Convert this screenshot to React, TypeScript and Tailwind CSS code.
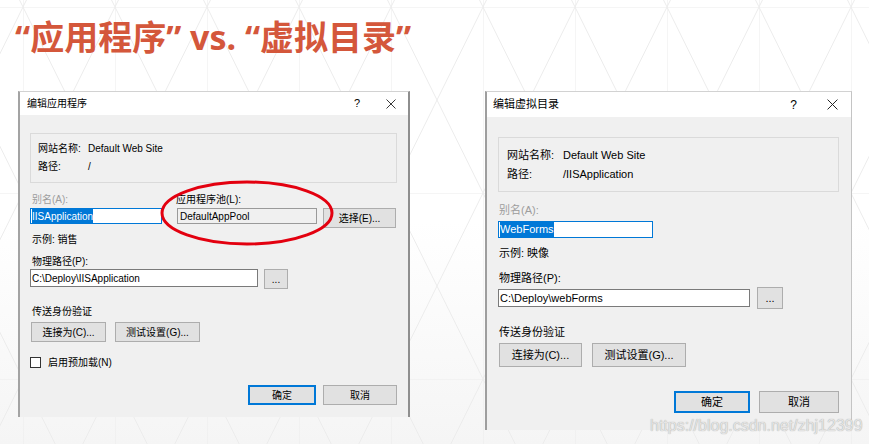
const font = { fontFamily: '"Liberation Sans", "Noto Sans CJK SC", sans-serif' }

function CloseIcon({ size }: { size: number }) {
  return (
    <svg width={size} height={size} viewBox="0 0 10 10" className="block">
      <path d="M0.5 0.5 L9.5 9.5 M9.5 0.5 L0.5 9.5" stroke="#222" strokeWidth="0.9" fill="none" />
    </svg>
  )
}

function Background() {
  return (
    <svg className="absolute inset-0" width="869" height="444">
      <defs>
        <pattern id="lattice" x="23" y="7" width="92" height="186" patternUnits="userSpaceOnUse">
          <path d="M0 0 V186 M0 0 H92 M0 0 L92 186 M92 0 L0 186" stroke="#ececec" strokeWidth="1" fill="none" />
        </pattern>
      </defs>
      <rect width="869" height="444" fill="url(#lattice)" />
    </svg>
  )
}

function LeftDialog() {
  return (
    <div className="flex h-[326px] w-[392px] shrink-0 flex-col border-t border-r-2 border-l-2 border-t-[#d2d2d2] border-r-[#8e8e8e] border-l-[#a3a3a3] bg-[#f0f0f0] text-[10px] text-black">
      <div className="flex h-[23px] items-center bg-white pl-[7px]">
        <span>编辑应用程序</span>
        <span className="ml-auto text-[11px]">?</span>
        <span className="mr-[12px] ml-[26px]"><CloseIcon size={10} /></span>
      </div>
      <div className="flex flex-col pr-[11px] pl-[10px]">
        <div className="mt-[18px] flex h-[50px] flex-col gap-[4px] border border-[#dadada] pt-[7px] pl-[7px]">
          <div className="flex h-[14px] items-center">
            <span className="w-[50px]">网站名称:</span>
            <span>Default Web Site</span>
          </div>
          <div className="flex h-[14px] items-center">
            <span className="w-[50px]">路径:</span>
            <span>/</span>
          </div>
        </div>

        <div className="mt-[9px] flex h-[14px] items-center">
          <span className="w-[146px] pl-[2px] text-[#9d9d9d]">别名(A):</span>
          <span>应用程序池(L):</span>
        </div>
        <div className="mt-[2px] flex items-start">
          <div className="flex h-[16px] w-[132px] items-center border border-[#0078d7] bg-white pl-px">
            <span className="bg-[#0078d7] text-white">IISApplication</span>
          </div>
          <div className="ml-[15px] flex h-[16px] w-[140px] items-center border border-[#9a9a9a] bg-[#f0f0f0] pl-[2px]">
            DefaultAppPool
          </div>
          <div className="ml-[6px] flex h-[20px] w-[73px] items-center justify-center border border-[#adadad] bg-[#e1e1e1]">
            选择(E)...
          </div>
        </div>

        <div className="mt-[4px] flex h-[14px] items-center pl-[2px]">示例: 销售</div>
        <div className="mt-[8px] flex h-[14px] items-center pl-[2px]">物理路径(P):</div>
        <div className="mt-[1px] flex items-start">
          <div className="flex h-[18px] w-[228px] items-center border border-[#7a7a7a] bg-white pl-px">
            C:\Deploy\IISApplication
          </div>
          <div className="ml-[6px] flex h-[20px] w-[24px] items-center justify-center border border-[#adadad] bg-[#e1e1e1]">
            ...
          </div>
        </div>

        <div className="mt-[15px] flex h-[14px] items-center pl-[2px]">传送身份验证</div>
        <div className="mt-[4px] ml-px flex gap-[9px]">
          <div className="flex h-[20px] w-[75px] items-center justify-center border border-[#adadad] bg-[#e1e1e1]">
            连接为(C)...
          </div>
          <div className="flex h-[20px] w-[85px] items-center justify-center border border-[#adadad] bg-[#e1e1e1]">
            测试设置(G)...
          </div>
        </div>

        <div className="mt-[13px] flex h-[14px] items-center">
          <span className="h-[11px] w-[11px] border border-[#333] bg-white" />
          <span className="ml-[7px]">启用预加载(N)</span>
        </div>

        <div className="mt-[16px] flex justify-end gap-[7px]">
          <div className="flex h-[20px] w-[68px] items-center justify-center border-2 border-[#0078d7] bg-[#e1e1e1]">
            确定
          </div>
          <div className="flex h-[20px] w-[74px] items-center justify-center border border-[#adadad] bg-[#e1e1e1]">
            取消
          </div>
        </div>
      </div>
    </div>
  )
}

function RightDialog() {
  return (
    <div className="flex h-[339px] w-[367px] shrink-0 flex-col border-t border-r border-l-2 border-t-[#d2d2d2] border-r-[#c4c4c4] border-l-[#9e9e9e] bg-[#f0f0f0] text-[11px] text-black">
      <div className="flex h-[25px] items-center bg-white pl-[6px]">
        <span>编辑虚拟目录</span>
        <span className="ml-auto text-[12px]">?</span>
        <span className="mr-[13px] ml-[30px]"><CloseIcon size={11} /></span>
      </div>
      <div className="flex flex-col pr-[12px] pl-[11px]">
        <div className="mt-[20px] flex h-[55px] flex-col gap-[3px] border border-[#dadada] pt-[9px] pl-[8px]">
          <div className="flex h-[16px] items-center">
            <span className="w-[56px]">网站名称:</span>
            <span>Default Web Site</span>
          </div>
          <div className="flex h-[16px] items-center">
            <span className="w-[56px]">路径:</span>
            <span>/IISApplication</span>
          </div>
        </div>

        <div className="mt-[10px] flex h-[16px] items-center pl-px text-[#9d9d9d]">别名(A):</div>
        <div className="mt-[3px] flex h-[17px] w-[155px] items-center border border-[#0078d7] bg-white pl-px">
          <span className="bg-[#0078d7] text-white">WebForms</span>
        </div>

        <div className="mt-[7px] flex h-[16px] items-center pl-px">示例: 映像</div>
        <div className="mt-[9px] flex h-[16px] items-center pl-px">物理路径(P):</div>
        <div className="mt-[1px] flex items-center">
          <div className="flex h-[18px] w-[252px] items-center border border-[#7a7a7a] bg-white pl-px">
            C:\Deploy\webForms
          </div>
          <div className="ml-[7px] flex h-[22px] w-[26px] items-center justify-center border border-[#adadad] bg-[#e1e1e1]">
            ...
          </div>
        </div>

        <div className="mt-[15px] flex h-[16px] items-center pl-px">传送身份验证</div>
        <div className="mt-[3px] ml-px flex gap-[10px]">
          <div className="flex h-[24px] w-[83px] items-center justify-center border border-[#adadad] bg-[#e1e1e1]">
            连接为(C)...
          </div>
          <div className="flex h-[24px] w-[94px] items-center justify-center border border-[#adadad] bg-[#e1e1e1]">
            测试设置(G)...
          </div>
        </div>

        <div className="mt-[24px] flex justify-end gap-[9px]">
          <div className="flex h-[22px] w-[76px] items-center justify-center border-2 border-[#0078d7] bg-[#e1e1e1]">
            确定
          </div>
          <div className="flex h-[22px] w-[80px] items-center justify-center border border-[#adadad] bg-[#e1e1e1]">
            取消
          </div>
        </div>
      </div>
    </div>
  )
}

function App() {
  return (
    <div className="relative h-[444px] w-[869px] overflow-hidden bg-gradient-to-b from-white via-white to-[#f5f5f5]" style={font}>
      <Background />
      <div className="relative">
        <h1
          className="pt-[17px] pl-[15px] text-[34px] leading-[40px] font-bold text-[#d4573b]"
          style={{ fontFamily: '"Noto Sans", "Noto Sans CJK SC", sans-serif' }}
        >
          “应用程序” vs. “虚拟目录”
        </h1>
        <div className="mt-[34px] flex items-start gap-[75px] pl-[18px]">
          <LeftDialog />
          <RightDialog />
        </div>
      </div>

      {/* red circle around the app pool */}
      <svg className="absolute top-[179px] left-[159px]" width="176" height="68">
        <ellipse cx="88" cy="34" rx="85" ry="31" stroke="#e3000f" strokeWidth="3" fill="none" />
      </svg>

      <div className="absolute top-[414px] left-[650px] text-[16px] text-[#e4e4e4] [text-shadow:0_0_1px_#9a9a9a]">
        https://blog.csdn.net/zhj12399
      </div>
    </div>
  )
}

export default App
